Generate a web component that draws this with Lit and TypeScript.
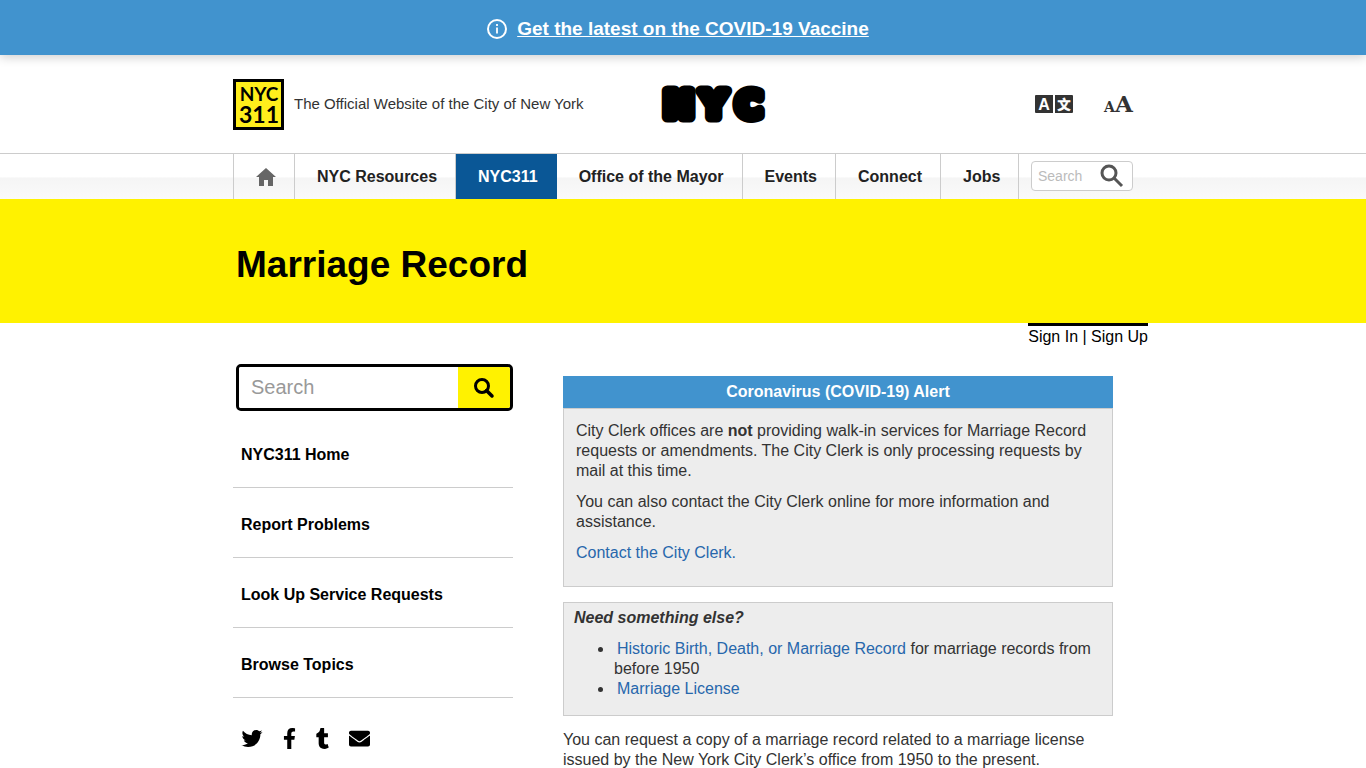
import { LitElement, html, css, svg } from "lit";
import { customElement } from "lit/decorators.js";

const NAV = ["NYC Resources", "NYC311", "Office of the Mayor", "Events", "Connect", "Jobs"];
const SIDE = ["NYC311 Home", "Report Problems", "Look Up Service Requests", "Browse Topics"];

const SOCIAL = [
  {
    name: "Twitter",
    width: 22,
    box: "0 0 512 512",
    shape: svg`<path d="M459.4 151.7c.3 4.5.3 9.1.3 13.6 0 138.7-105.600 298.600-298.600 298.600-59.500 0-114.700-17.200-161.100-47.100 8.400 1 16.600 1.300 25.300 1.300 49.100 0 94.200-16.600 130.300-44.800-46.100-1-84.800-31.200-98.100-72.800 6.500 1 13 1.600 19.800 1.600 9.400 0 18.800-1.300 27.600-3.600-48.100-9.700-84.100-52-84.100-103v-1.300c14 7.800 30.200 12.700 47.400 13.300-28.300-18.800-46.800-51-46.800-87.400 0-19.500 5.200-37.400 14.300-53 51.700 63.700 129.300 105.300 216.400 109.800-1.600-7.800-2.600-15.900-2.600-24 0-57.800 46.800-104.900 104.900-104.900 30.200 0 57.500 12.700 76.700 33.100 23.700-4.500 46.500-13.300 66.600-25.300-7.800 24.400-24.400 44.800-46.100 57.800 21.100-2.300 41.600-8.100 60.400-16.200-14.300 20.800-32.200 39.300-52.600 54.300z"/>`,
  },
  {
    name: "Facebook",
    width: 13,
    box: "0 0 320 512",
    shape: svg`<path d="M279.100 288l14.200-92.700h-88.900v-60.100c0-25.300 12.400-50.100 52.200-50.100h40.400V6.300S260.400 0 225.400 0c-73.200 0-121.100 44.400-121.100 124.700v70.600H22.900V288h81.400v224h100.200V288z"/>`,
  },
  {
    name: "Tumblr",
    width: 13,
    box: "0 0 320 512",
    shape: svg`<path d="M309.800 480.300c-13.600 14.500-50 31.700-97.400 31.700-120.800 0-147-88.800-147-140.600v-144H17.900c-5.500 0-10-4.500-10-10v-68c0-7.200 4.500-13.600 11.300-16 62-21.800 81.500-76 84.300-117.100.8-11 6.500-16.300 16.100-16.300h70.900c5.500 0 10 4.500 10 10v115.200h83c5.500 0 10 4.400 10 9.900v81.700c0 5.500-4.500 10-10 10h-83.400V360c0 34.200 23.700 53.600 68 35.800 4.800-1.900 9-3.200 12.700-2.200 3.500.9 5.800 3.400 7.400 7.900l22 64.300c1.800 5 3.300 10.600-.4 14.500z"/>`,
  },
  {
    name: "Email",
    width: 21,
    box: "0 0 512 512",
    shape: svg`<path d="M502.300 190.800c3.900-3.100 9.700-.2 9.700 4.700V400c0 26.500-21.500 48-48 48H48c-26.500 0-48-21.500-48-48V195.600c0-5 5.700-7.800 9.700-4.700 22.400 17.400 52.100 39.500 154.100 113.600 21.100 15.400 56.700 47.800 92.200 47.600 35.700.3 72-32.800 92.300-47.600 102-74.100 131.600-96.300 154-113.700zM256 320c23.200.4 56.600-29.200 73.400-41.400 132.700-96.300 142.800-104.700 173.400-128.700 5.800-4.500 9.200-11.500 9.200-18.900v-19c0-26.500-21.500-48-48-48H48c-26.500 0-48 21.500-48 48v19c0 7.400 3.400 14.300 9.200 18.900 30.600 23.900 40.700 32.400 173.400 128.700 16.800 12.200 50.200 41.800 73.400 41.400z"/>`,
  },
];

@customElement("app-root")
export class AppRoot extends LitElement {
  static styles = css`
    :host {
      display: block;
      height: 100vh;
      overflow: hidden;
      background: #fff;
      color: #333;
      font: 16px/20px "Liberation Sans", Arial, sans-serif;
    }
    * { box-sizing: border-box; }
    a { color: inherit; text-decoration: none; }
    p { margin: 0; }
    svg { display: block; flex: none; overflow: visible; }
    .wrap { width: 100%; max-width: 900px; margin: 0 auto; }

    .notice {
      display: flex;
      align-items: center;
      justify-content: center;
      gap: 10px;
      height: 55px;
      padding-right: 10px;
      padding-top: 2px;
      background: #4193ce;
      box-shadow: 0 2px 10px rgba(0, 0, 0, 0.2);
      color: #fff;
    }
    .notice a {
      font-size: 19px;
      font-weight: bold;
      text-decoration: underline;
    }

    .brand {
      display: grid;
      grid-template-columns: 1fr auto 1fr;
      align-items: center;
      height: 98px;
    }
    .brand-left { display: flex; align-items: center; gap: 10px; font-size: 15px; white-space: nowrap; }
    .badge {
      display: block;
      width: 51px;
      height: 51px;
      border: 3px solid #000;
      background: #ffee1c;
    }
    .wordmark { margin-left: 64px; }
    .tools { display: flex; justify-content: flex-end; gap: 31px; }
    .tools button, .nav-search button, .search button {
      padding: 0;
      border: 0;
      background: none;
      cursor: pointer;
    }

    .nav {
      border-top: 1px solid #ccc;
      background: linear-gradient(#fff 0, #fff 50%, #f5f5f5 54%, #fafafa 100%);
    }
    .nav-row { display: flex; height: 45px; }
    .nav-row > a {
      display: flex;
      align-items: center;
      padding: 0 18px 0 22px;
      border-right: 1px solid #ccc;
      color: #222;
      font-weight: bold;
      white-space: nowrap;
    }
    .nav-row > a.home { border-left: 1px solid #ccc; color: #666; }
    .nav-row > a.current { background: #0a5796; color: #fff; border-color: #0a5796; }
    .nav-search {
      display: flex;
      align-items: center;
      width: 102px;
      height: 30px;
      margin: 7px 0 0 auto;
      padding: 0 8px 0 6px;
      border: 1px solid #ccc;
      border-radius: 4px;
      background: #fff;
    }
    .nav-search input {
      flex: 1;
      min-width: 0;
      padding: 0;
      border: 0;
      background: none;
      font: 14px/20px "Liberation Sans", Arial, sans-serif;
      outline: 0;
    }
    .nav-search input::placeholder { color: #bbb; opacity: 1; }

    .hero { background: #fff200; }
    .hero h1 {
      margin: 0;
      padding: 44px 3px 36px;
      color: #000;
      font-size: 37px;
      line-height: 44px;
    }

    .account { display: flex; justify-content: flex-end; max-width: 930px; margin: 0 auto; }
    .account div { padding-top: 1px; border-top: 3px solid #000; color: #000; white-space: nowrap; }

    .columns {
      display: grid;
      grid-template-columns: 280px minmax(0, 550px);
      gap: 50px;
      padding-top: 17px;
    }
    .search {
      display: flex;
      height: 47px;
      margin-left: 3px;
      border: 3px solid #000;
      border-radius: 5px;
      overflow: hidden;
    }
    .search input {
      flex: 1;
      min-width: 0;
      padding: 0 12px 2px;
      border: 0;
      font: 20px/24px "Liberation Sans", Arial, sans-serif;
      outline: 0;
    }
    .search input::placeholder { color: #999; opacity: 1; }
    .search button {
      display: grid;
      place-items: center;
      width: 52px;
      background: #fff200;
    }
    .side { display: flex; flex-direction: column; padding-top: 7px; }
    .side a {
      padding: 27px 8px 22px;
      border-bottom: 1px solid #ccc;
      color: #000;
      font-weight: bold;
    }
    .social { display: flex; align-items: center; gap: 20px; padding: 30px 8px 0; color: #000; }

    .main { padding-top: 12px; }
    .alert h2 {
      margin: 0;
      padding: 6px;
      background: #4193ce;
      color: #fff;
      font-size: 16px;
      line-height: 20px;
      text-align: center;
    }
    .alert-body {
      display: flex;
      flex-direction: column;
      gap: 11px;
      padding: 12px 12px 23px;
      border: 1px solid #ccc;
      background: #ededed;
    }
    .link { color: #2767ac; }
    .else {
      margin: 15px 0 14px;
      padding: 5px 10px 16px;
      border: 1px solid #ccc;
      background: #ededed;
    }
    .else ul { margin: 11px 0 0; padding: 0 0 0 40px; }
    .else li a { padding-left: 3px; }
  `;

  render() {
    return html`
      <div class="notice">
        <svg width="20" height="20" viewBox="0 0 20 20" fill="none" stroke="currentColor">
          <circle cx="10" cy="10" r="9" stroke-width="2" />
          <path d="M10 8.500v6M10 5v2" stroke-width="1.800" />
        </svg>
        <a href="#">Get the latest on the COVID-19 Vaccine</a>
      </div>
      <header>
        <div class="wrap brand">
          <div class="brand-left">
            <a class="badge" href="#" aria-label="NYC311">
              <svg width="45" height="45" viewBox="0 0 45 45" font-family="Lato" font-weight="bold" text-anchor="middle">
                <text x="23" y="19" font-size="19">NYC</text>
                <text x="23" y="41" font-size="23">311</text>
              </svg>
            </a>
            <span>The Official Website of the City of New York</span>
          </div>
          <a class="wordmark" href="#" aria-label="NYC">
            <svg width="106" height="36" viewBox="0 0 106 36" stroke="#000" stroke-width="11" stroke-linejoin="round">
              <text x="2 39 74" y="31" font-family="DejaVu Sans" font-weight="bold" font-size="35">NYC</text>
            </svg>
          </a>
          <div class="tools">
            <button aria-label="Translate">
              <svg width="38" height="20" viewBox="0 0 38 20" fill="#fff">
                <path fill="#333" d="M1 1h17v18H1a1 1 0 0 1-1-1V2a1 1 0 0 1 1-1zM20 1h17a1 1 0 0 1 1 1v16a1 1 0 0 1-1 1H20z" />
                <text x="9" y="16" font-family="Liberation Sans" font-weight="bold" font-size="16" text-anchor="middle">A</text>
                <text x="29" y="15" font-family="Noto Sans CJK SC" font-weight="bold" font-size="13" text-anchor="middle" stroke="#fff" stroke-width="0.500">文</text>
              </svg>
            </button>
            <button aria-label="Text size">
              <svg width="29" height="20" viewBox="0 0 29 20" fill="#333" font-family="DejaVu Serif" font-weight="bold">
                <text x="0" y="18" font-size="14">A</text>
                <text x="11" y="18" font-size="23">A</text>
              </svg>
            </button>
          </div>
        </div>
        <nav class="nav">
          <div class="wrap nav-row">
            <a class="home" href="#" aria-label="Home">
              <svg width="20" height="18" viewBox="0 0 20 18" fill="currentColor">
                <path d="M10 0L0 9h3v9h5v-6h4v6h5V9h3z" />
              </svg>
            </a>
            ${NAV.map((n) => html`<a class=${n === "NYC311" ? "current" : ""} href="#">${n}</a>`)}
            <div class="nav-search">
              <input type="text" aria-label="Search NYC" placeholder="Search" />
              <button aria-label="Search">
                <svg width="24" height="24" viewBox="0 0 24 24" fill="none" stroke="#555" stroke-width="3">
                  <circle cx="9" cy="9" r="7" />
                  <path d="M14 14l8 8" />
                </svg>
              </button>
            </div>
          </div>
        </nav>
      </header>
      <div class="hero"><div class="wrap"><h1>Marriage Record</h1></div></div>
      <div class="account"><div><a href="#">Sign In</a> | <a href="#">Sign Up</a></div></div>
      <div class="wrap columns">
        <aside>
          <div class="search">
            <input type="text" aria-label="Search NYC311" placeholder="Search" />
            <button aria-label="Search">
              <svg width="20" height="20" viewBox="0 0 20 20" fill="none" stroke="#000" stroke-width="3">
                <circle cx="8" cy="8" r="6.500" />
                <path d="M12.500 12.500l5.500 5.500" stroke-width="3.500" stroke-linecap="round" />
              </svg>
            </button>
          </div>
          <nav class="side">${SIDE.map((s) => html`<a href="#">${s}</a>`)}</nav>
          <div class="social">
            ${SOCIAL.map(
              (s) => html`<a href="#" aria-label=${s.name}>
                <svg width=${s.width} height="21" viewBox=${s.box} fill="currentColor">${s.shape}</svg>
              </a>`
            )}
          </div>
        </aside>
        <main class="main">
          <section class="alert">
            <h2>Coronavirus (COVID-19) Alert</h2>
            <div class="alert-body">
              <p>City Clerk offices are <strong>not</strong> providing walk-in services for Marriage Record requests or amendments. The City Clerk is only processing requests by mail at this time.</p>
              <p>You can also contact the City Clerk online for more information and assistance.</p>
              <p><a class="link" href="#">Contact the City Clerk.</a></p>
            </div>
          </section>
          <section class="else">
            <strong><em>Need something else?</em></strong>
            <ul>
              <li><a class="link" href="#">Historic Birth, Death, or Marriage Record</a> for marriage records from before 1950</li>
              <li><a class="link" href="#">Marriage License</a></li>
            </ul>
          </section>
          <p>You can request a copy of a marriage record related to a marriage license issued by the New York City Clerk’s office from 1950 to the present.</p>
        </main>
      </div>
    `;
  }
}
